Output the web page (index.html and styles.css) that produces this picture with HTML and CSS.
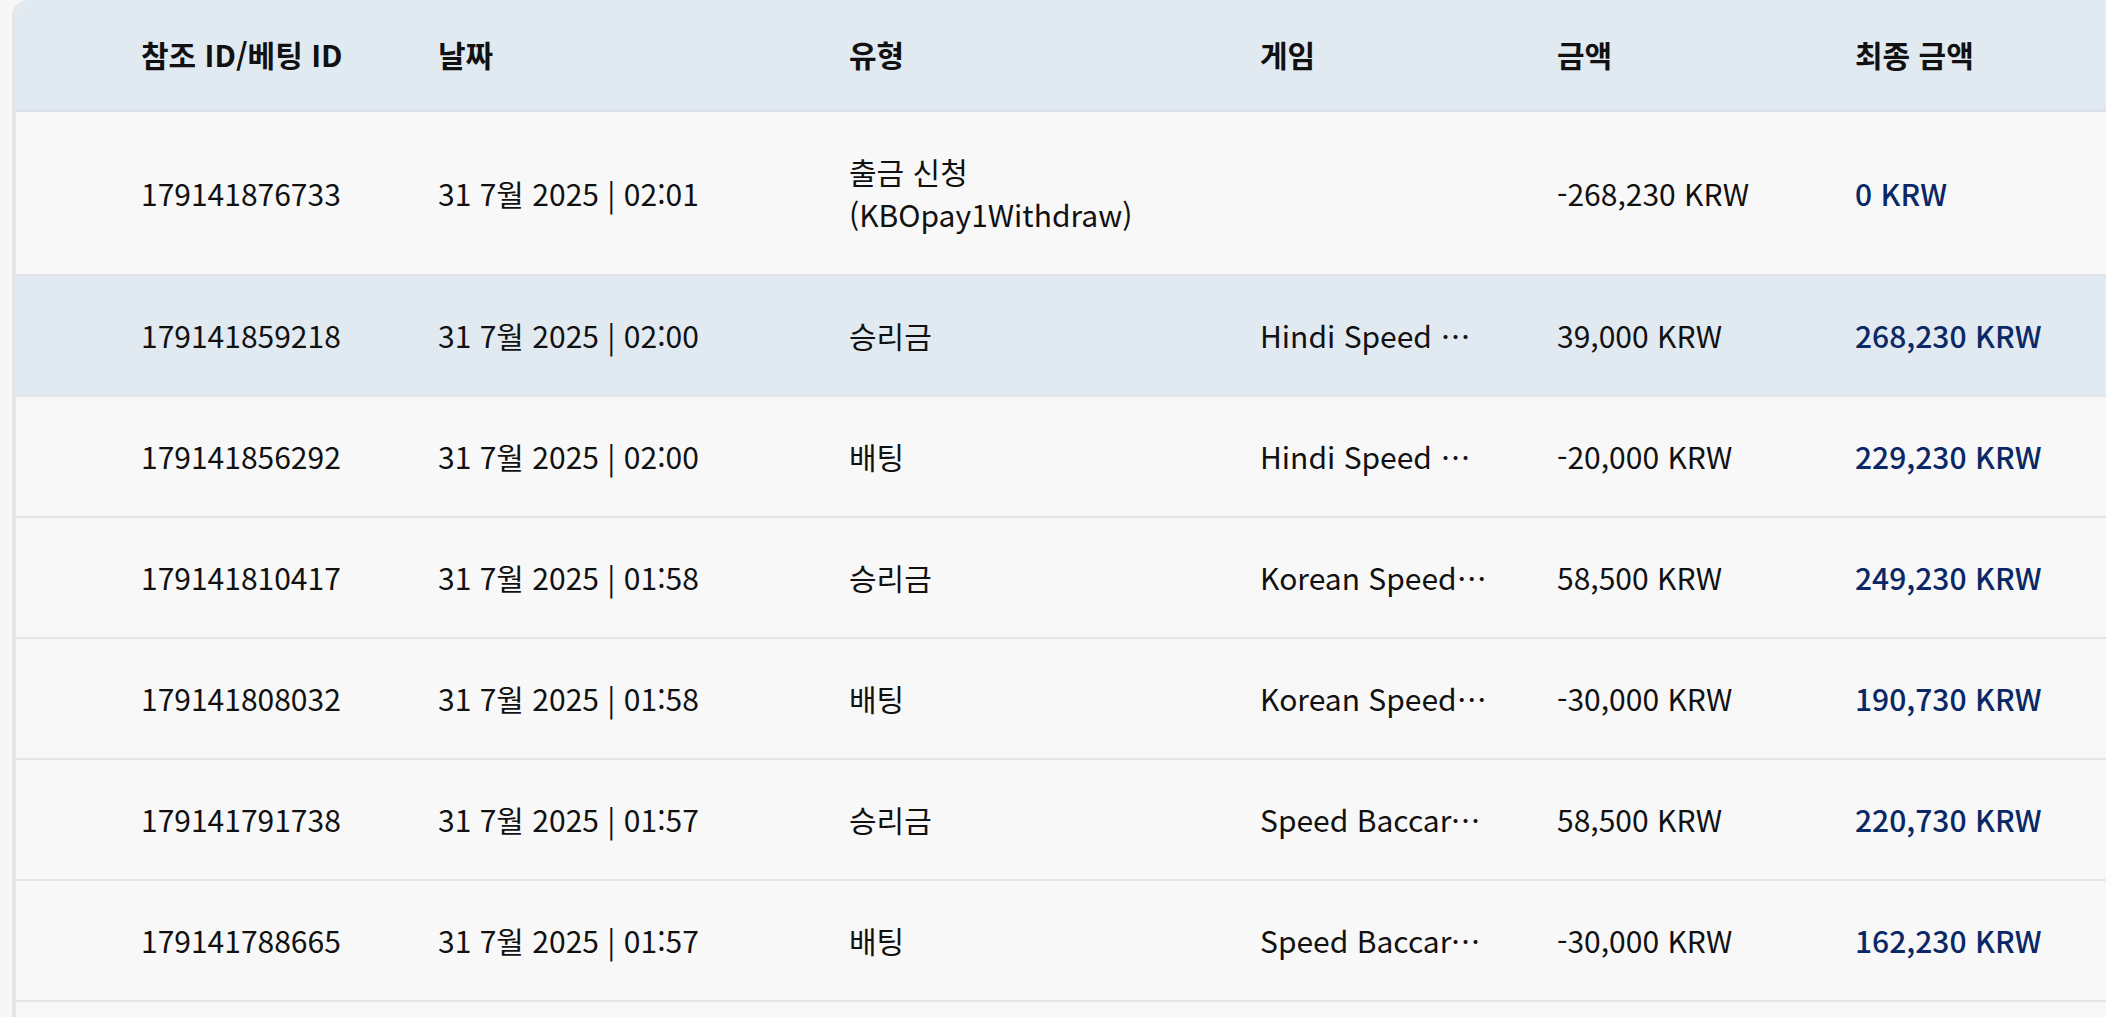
FILE: index.html
```html
<!DOCTYPE html>
<html lang="ko">
<head>
<meta charset="utf-8">
<title>거래 내역</title>
<link rel="stylesheet" href="styles.css">
</head>
<body>
<div class="card">
  <div class="row head">
    <div class="cell">참조 ID/베팅 ID</div>
    <div class="cell">날짜</div>
    <div class="cell">유형</div>
    <div class="cell">게임</div>
    <div class="cell">금액</div>
    <div class="cell">최종 금액</div>
  </div>
  <div class="row">
    <div class="cell">179141876733</div>
    <div class="cell">31 7월 2025 | 02:01</div>
    <div class="cell">출금 신청<br>(KBOpay1Withdraw)</div>
    <div class="cell"></div>
    <div class="cell">-268,230 KRW</div>
    <div class="cell final">0 KRW</div>
  </div>
  <div class="row active">
    <div class="cell">179141859218</div>
    <div class="cell">31 7월 2025 | 02:00</div>
    <div class="cell">승리금</div>
    <div class="cell game">Hindi Speed Baccarat</div>
    <div class="cell">39,000 KRW</div>
    <div class="cell final">268,230 KRW</div>
  </div>
  <div class="row">
    <div class="cell">179141856292</div>
    <div class="cell">31 7월 2025 | 02:00</div>
    <div class="cell">배팅</div>
    <div class="cell game">Hindi Speed Baccarat</div>
    <div class="cell">-20,000 KRW</div>
    <div class="cell final">229,230 KRW</div>
  </div>
  <div class="row">
    <div class="cell">179141810417</div>
    <div class="cell">31 7월 2025 | 01:58</div>
    <div class="cell">승리금</div>
    <div class="cell game">Korean Speed Baccarat</div>
    <div class="cell">58,500 KRW</div>
    <div class="cell final">249,230 KRW</div>
  </div>
  <div class="row">
    <div class="cell">179141808032</div>
    <div class="cell">31 7월 2025 | 01:58</div>
    <div class="cell">배팅</div>
    <div class="cell game">Korean Speed Baccarat</div>
    <div class="cell">-30,000 KRW</div>
    <div class="cell final">190,730 KRW</div>
  </div>
  <div class="row">
    <div class="cell">179141791738</div>
    <div class="cell">31 7월 2025 | 01:57</div>
    <div class="cell">승리금</div>
    <div class="cell game">Speed Baccarat A</div>
    <div class="cell">58,500 KRW</div>
    <div class="cell final">220,730 KRW</div>
  </div>
  <div class="row">
    <div class="cell">179141788665</div>
    <div class="cell">31 7월 2025 | 01:57</div>
    <div class="cell">배팅</div>
    <div class="cell game">Speed Baccarat A</div>
    <div class="cell">-30,000 KRW</div>
    <div class="cell final">162,230 KRW</div>
  </div>
</div>
</body>
</html>
```
FILE: styles.css
```css
html, body {
  margin: 0;
  padding: 0;
  background: #f7f7f7;
  overflow: hidden;
}
body {
  font-family: "Noto Sans CJK KR", "Noto Sans", sans-serif;
  font-size: 30px;
  line-height: 43px;
  color: #111;
}
.card {
  margin-left: 12px;
  width: 2200px;
  min-height: 1100px;
  background: #f8f8f8;
  border-left: 4px solid #e2e5ea;
  border-top-left-radius: 16px;
  overflow: hidden;
}
.row {
  display: grid;
  grid-template-columns: 297px 411px 411px 297px 298px 1fr;
  padding: 38px 0 38px 125px;
  border-bottom: 2px solid #e3e5e9;
  align-items: center;
}
.row.head {
  background: #e1e9f1;
  padding-top: 33px;
  padding-bottom: 33px;
  border-bottom: 3px solid #dbe2ea;
  font-weight: 700;
}
.row.active {
  background: #e1e9f1;
}
.cell {
  white-space: nowrap;
}
.game {
  max-width: 228px;
  overflow: hidden;
  text-overflow: ellipsis;
}
.final {
  color: #0a2866;
  font-weight: 500;
}
```
